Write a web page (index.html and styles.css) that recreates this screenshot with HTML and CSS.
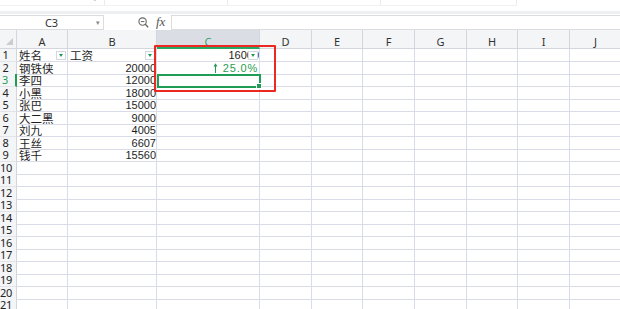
FILE: index.html
```html
<!DOCTYPE html>
<html lang="zh">
<head>
  <meta charset="UTF-8">
  <title>工资表</title>
  <link rel="stylesheet" href="styles.css">
</head>
<body>

  <div class="toolbar-tail">
    <div class="tail-box tail-first"><span class="tail-caret">⌄</span></div>
    <div class="tail-box tail-second"></div>
    <div class="tail-box tail-third"></div>
    <div class="tail-box tail-fourth"></div>
  </div>

  <div class="formula-bar">
    <div class="name-box">
      <span>C3</span>
      <span class="name-caret">▾</span>
    </div>
    <svg class="zoom-icon" width="11" height="11" viewBox="0 0 11 11">
      <circle cx="4.6" cy="4.6" r="3.7" fill="none" stroke="#666" stroke-width="1.1"/>
      <line x1="2.8" y1="4.6" x2="6.4" y2="4.6" stroke="#666" stroke-width="1"/>
      <line x1="7.3" y1="7.3" x2="10.2" y2="10.2" stroke="#666" stroke-width="1.3"/>
    </svg>
    <span class="fx">fx</span>
    <div class="formula-input"></div>
  </div>

  <div class="sheet">
    <div class="row head">
      <span class="corner"><i></i></span>
      <span>A</span><span>B</span><span class="active-col">C</span><span>D</span><span>E</span>
      <span>F</span><span>G</span><span>H</span><span>I</span><span>J</span>
    </div>
    <div class="row">
      <span class="rh">1</span>
      <span class="cjk filter-cell">姓名<b class="filter"></b></span>
      <span class="cjk filter-cell">工资<b class="filter"></b></span>
      <span class="num filter-cell"><em>16000</em><b class="filter"></b></span>
      <span></span><span></span><span></span><span></span><span></span><span></span><span></span>
    </div>
    <div class="row">
      <span class="rh">2</span>
      <span class="cjk">钢铁侠</span><span class="num">20000</span>
      <span class="num rate">
        <svg width="5" height="10" viewBox="0 0 5 10"><path d="M2.5 0.3 L0.5 3.4 H2 V10 H3 V3.4 H4.5 Z" fill="#1f9d55"/></svg>
        25.0%
      </span>
      <span></span><span></span><span></span><span></span><span></span><span></span><span></span>
    </div>
    <div class="row">
      <span class="rh rh-active">3</span>
      <span class="cjk">李四</span><span class="num">12000</span><span></span>
      <span></span><span></span><span></span><span></span><span></span><span></span><span></span>
    </div>
    <div class="row">
      <span class="rh">4</span>
      <span class="cjk">小黑</span><span class="num">18000</span><span></span>
      <span></span><span></span><span></span><span></span><span></span><span></span><span></span>
    </div>
    <div class="row">
      <span class="rh">5</span>
      <span class="cjk">张巴</span><span class="num">15000</span><span></span>
      <span></span><span></span><span></span><span></span><span></span><span></span><span></span>
    </div>
    <div class="row">
      <span class="rh">6</span>
      <span class="cjk">大二黑</span><span class="num">9000</span><span></span>
      <span></span><span></span><span></span><span></span><span></span><span></span><span></span>
    </div>
    <div class="row">
      <span class="rh">7</span>
      <span class="cjk">刘九</span><span class="num">4005</span><span></span>
      <span></span><span></span><span></span><span></span><span></span><span></span><span></span>
    </div>
    <div class="row">
      <span class="rh">8</span>
      <span class="cjk">王丝</span><span class="num">6607</span><span></span>
      <span></span><span></span><span></span><span></span><span></span><span></span><span></span>
    </div>
    <div class="row">
      <span class="rh">9</span>
      <span class="cjk">钱千</span><span class="num">15560</span><span></span>
      <span></span><span></span><span></span><span></span><span></span><span></span><span></span>
    </div>
    <div class="row"><span class="rh">10</span><span></span><span></span><span></span><span></span><span></span><span></span><span></span><span></span><span></span><span></span></div>
    <div class="row"><span class="rh">11</span><span></span><span></span><span></span><span></span><span></span><span></span><span></span><span></span><span></span><span></span></div>
    <div class="row"><span class="rh">12</span><span></span><span></span><span></span><span></span><span></span><span></span><span></span><span></span><span></span><span></span></div>
    <div class="row"><span class="rh">13</span><span></span><span></span><span></span><span></span><span></span><span></span><span></span><span></span><span></span><span></span></div>
    <div class="row"><span class="rh">14</span><span></span><span></span><span></span><span></span><span></span><span></span><span></span><span></span><span></span><span></span></div>
    <div class="row"><span class="rh">15</span><span></span><span></span><span></span><span></span><span></span><span></span><span></span><span></span><span></span><span></span></div>
    <div class="row"><span class="rh">16</span><span></span><span></span><span></span><span></span><span></span><span></span><span></span><span></span><span></span><span></span></div>
    <div class="row"><span class="rh">17</span><span></span><span></span><span></span><span></span><span></span><span></span><span></span><span></span><span></span><span></span></div>
    <div class="row"><span class="rh">18</span><span></span><span></span><span></span><span></span><span></span><span></span><span></span><span></span><span></span><span></span></div>
    <div class="row"><span class="rh">19</span><span></span><span></span><span></span><span></span><span></span><span></span><span></span><span></span><span></span><span></span></div>
    <div class="row"><span class="rh">20</span><span></span><span></span><span></span><span></span><span></span><span></span><span></span><span></span><span></span><span></span></div>
    <div class="row"><span class="rh">21</span><span></span><span></span><span></span><span></span><span></span><span></span><span></span><span></span><span></span><span></span></div>

    <div class="selection"><i class="handle"></i></div>
    <div class="highlight-box"></div>
  </div>

</body>
</html>
```

FILE: styles.css
```css
:root {
  --grid: #d9dce7;
  --head-bg: #f4f5f7;
  --head-line: #d3d6de;
  --green: #1f9d55;
  --red: #ea2a22;
  --text: #1e1e1e;
}

body {
  margin: 0;
  overflow: hidden;
  background: #fff;
  color: var(--text);
  font-family: "Noto Sans", "Noto Sans CJK SC", sans-serif;
}

/* the bottom edge of the ribbon above, cut off by the crop */
.toolbar-tail {
  display: flex;
  height: 11px;
  border-bottom: 3px solid #eeeff1;
}

.tail-box {
  height: 5px;
  border-bottom: 1px solid #f2f2f2;
  border-right: 1px solid #ececec;
  position: relative;
}

.tail-first { width: 104px; }
.tail-second { width: 122px; }
.tail-third { width: 152px; }
.tail-fourth { width: 135px; }

.tail-caret {
  position: absolute;
  right: 5px;
  top: -9px;
  font-size: 9px;
  color: #bbb;
}

.formula-bar {
  display: flex;
  align-items: center;
  height: 16px;
}

.name-box {
  display: flex;
  align-items: center;
  justify-content: center;
  position: relative;
  width: 104px;
  height: 15px;
  border: 1px solid #dcdcdc;
  border-left: none;
  font-size: 11px;
  color: #333;
  box-sizing: border-box;
}

.name-caret {
  position: absolute;
  right: 3px;
  top: 2px;
  font-size: 7px;
  color: #888;
}

.zoom-icon {
  margin-left: 34px;
}

.fx {
  margin-left: 7px;
  font-family: "Liberation Serif", serif;
  font-style: italic;
  font-size: 13px;
  color: #555;
}

.formula-input {
  flex: 1;
  height: 15px;
  margin-left: 6px;
  border: 1px solid #dcdcdc;
  border-right: none;
  box-sizing: border-box;
}

.sheet {
  position: relative;
}

.row {
  display: grid;
  grid-template-columns: 17px 51px 89px 103px 52px 51px 52px 52px 51px 52px 52px;
  height: 12.5px;
}

.row > span {
  box-sizing: border-box;
  border-right: 1px solid var(--grid);
  border-bottom: 1px solid var(--grid);
  overflow: hidden;
  white-space: nowrap;
  line-height: 12px;
  font-size: 11px;
  padding: 0 1px;
}

.row.head {
  height: 19px;
  background: var(--head-bg);
}

.row.head > span {
  border-color: var(--head-line);
  line-height: 14px;
  padding-top: 5px;
  text-align: center;
  font-size: 11px;
  color: #333;
}

.row.head > .active-col {
  background: #dadde3;
  color: #35a56a;
  border-bottom: 2px solid #27a862;
}

.corner {
  position: relative;
}

.corner i {
  position: absolute;
  right: 3px;
  bottom: 3px;
  border-left: 7px solid transparent;
  border-bottom: 7px solid #c9ccd2;
}

.row > .rh {
  background: var(--head-bg);
  border-right-color: var(--head-line);
  border-bottom-color: #e2e4ea;
  color: #222;
  padding: 0 5px 0 0;
  font-size: 11px;
  text-align: center;
  letter-spacing: -0.4px;
  overflow: visible;
}

.row > .rh-active {
  color: #1f9d55;
  border-right: 2px solid var(--green);
}

.row > .cjk {
  font-family: "Noto Sans CJK SC", sans-serif;
  font-size: 11.5px;
  line-height: 12.5px;
  padding-left: 2px;
}

.row > .num {
  font-family: "Liberation Sans", sans-serif;
  text-align: right;
  padding-right: 0;
  line-height: 13px;
}

.filter-cell {
  position: relative;
}

.filter-cell em {
  font-style: normal;
  display: inline-block;
}

.filter {
  position: absolute;
  right: 1px;
  top: 2px;
  width: 8px;
  height: 7px;
  background: #fff;
  border: 1px solid #d4d7dd;
}

.filter::after {
  content: "";
  position: absolute;
  left: 2px;
  top: 2px;
  border-left: 2px solid transparent;
  border-right: 2px solid transparent;
  border-top: 3px solid var(--green);
}

.row > .rate {
  color: #2a9d4f;
  letter-spacing: 0.8px;
  padding-right: 1px;
}

.rate svg {
  vertical-align: -1px;
  margin-right: 1px;
}

.selection {
  position: absolute;
  left: 157px;
  top: 44px;
  width: 104px;
  height: 14px;
  border: 2px solid var(--green);
  box-sizing: border-box;
}

.handle {
  position: absolute;
  right: -3px;
  bottom: -3px;
  width: 4px;
  height: 4px;
  background: var(--green);
  border: 1px solid #fff;
}

.highlight-box {
  position: absolute;
  left: 154px;
  top: 15px;
  width: 122px;
  height: 47px;
  border: 2px solid var(--red);
  border-radius: 1px;
  box-sizing: border-box;
}
```
